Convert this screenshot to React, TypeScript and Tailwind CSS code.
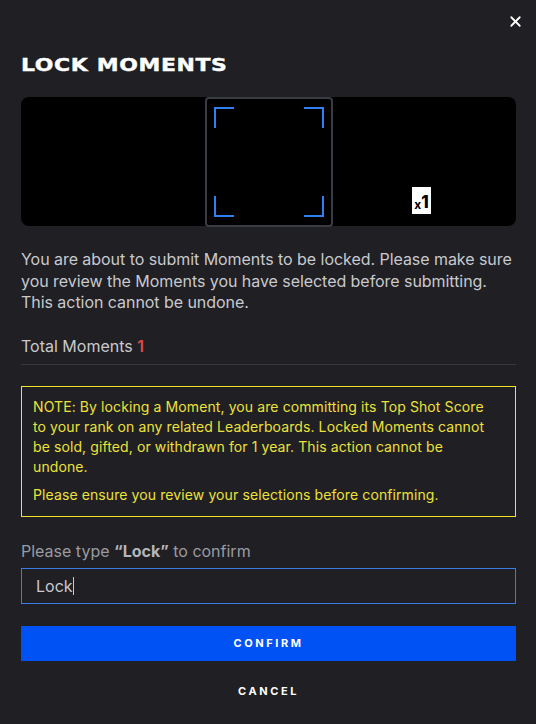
import React from 'react';
import { X } from 'lucide-react';

function Bracket({ pos }: { pos: 'tl' | 'tr' | 'bl' | 'br' }) {
  const cls = {
    tl: 'top-[8px] left-[7px] border-t-2 border-l-2',
    tr: 'top-[8px] right-[7px] border-t-2 border-r-2',
    bl: 'bottom-[8px] left-[7px] border-b-2 border-l-2',
    br: 'bottom-[8px] right-[7px] border-b-2 border-r-2',
  }[pos];
  return <span className={`absolute w-[20px] h-[21px] border-[#3080f2] ${cls}`} />;
}

export default function App() {
  return (
    <div
      className="w-[536px] h-[724px] bg-[#1f1f24] pl-[21px] pr-[20px] text-[#c9c9cd] overflow-hidden"
      style={{ fontFamily: 'Inter, "Liberation Sans", sans-serif' }}
    >
      <div className="flex justify-end pt-[13px] -mr-[8px]">
        <button className="text-white">
          <X className="w-[17px] h-[17px]" strokeWidth={2.5} />
        </button>
      </div>

      <h1
        className="mt-[25px] text-white text-[18px] font-bold leading-[20px] inline-block origin-left scale-x-[1.22] tracking-[0.5px]"
        style={{ fontFamily: '"DejaVu Sans", sans-serif', WebkitTextStroke: '0.4px white' }}
      >
        LOCK MOMENTS
      </h1>

      <div className="mt-[20px] h-[129px] bg-black rounded-[8px] flex">
        <div className="w-[184px]" />
        <div className="relative w-[128px] h-[130px] border-2 border-[#3a3c44] rounded-[4px]">
          <Bracket pos="tl" />
          <Bracket pos="tr" />
          <Bracket pos="bl" />
          <Bracket pos="br" />
        </div>
        <div className="flex-1 flex items-end pb-[12px] pl-[79px]">
          <div className="w-[19px] h-[27px] bg-white flex items-end justify-center pb-[3px] text-black leading-none">
            <span className="text-[12px] font-bold">x</span>
            <span className="text-[17px] font-extrabold">1</span>
          </div>
        </div>
      </div>

      <p className="mt-[23px] text-[16px] leading-[21.5px] tracking-[-0.05px]">
        You are about to submit Moments to be locked. Please make sure you review the Moments you have selected before submitting. This action cannot be undone.
      </p>

      <div className="mt-[21px] pb-[7px] border-b border-[#38383e] text-[16px] leading-[22px]">
        Total Moments <span className="text-[#e04848] font-semibold">1</span>
      </div>

      <div className="mt-[21px] border border-[#f2e22a] pl-[11px] pr-[24px] pt-[10px] pb-[11px] text-[#ece23a] text-[14px] leading-[20px] tracking-[0.1px]">
        <p>
          NOTE: By locking a Moment, you are committing its Top Shot Score to your rank on any related Leaderboards. Locked Moments cannot be sold, gifted, or withdrawn for 1 year. This action cannot be undone.
        </p>
        <p className="mt-[8px]">Please ensure you review your selections before confirming.</p>
      </div>

      <div className="mt-[23px] text-[16px] leading-[22px] text-[#9b9ba1]">
        Please type <span className="font-bold text-[#b5b5ba]">“Lock”</span> to confirm
      </div>

      <div className="mt-[6px] h-[36px] border border-[#3a7ce6] flex items-center pl-[14px] text-[16px] text-[#c9c9cd]">
        Lock<span className="w-px h-[18px] bg-[#c9c9cd]" />
      </div>

      <button className="mt-[22px] w-full h-[35px] bg-[#0052f5] text-white text-[11px] font-bold tracking-[2.6px]">
        CONFIRM
      </button>

      <button className="mt-[13px] w-full h-[36px] text-white text-[11px] font-bold tracking-[2.6px]">
        CANCEL
      </button>
    </div>
  );
}
